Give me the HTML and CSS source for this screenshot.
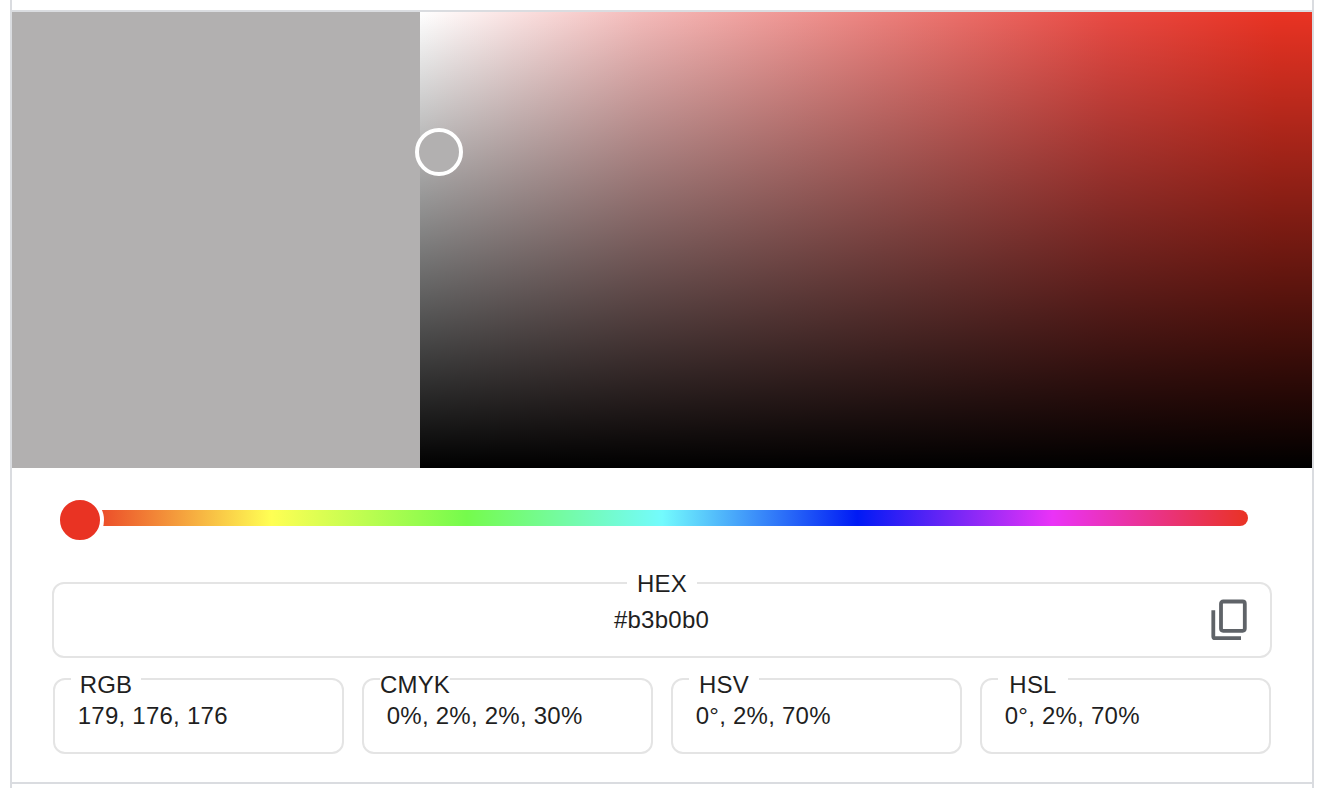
FILE: index.html
```html
<!DOCTYPE html>
<html lang="en">
<head>
<meta charset="utf-8">
<title>Color picker</title>
<link rel="stylesheet" href="styles.css">
</head>
<body>
<main class="frame">
  <section class="picker">
    <div class="canvas">
      <div class="swatch"></div>
      <div class="shades"><span class="cursor"></span></div>
    </div>
    <div class="hue"><div class="track"><span class="thumb"></span></div></div>
    <div class="fields">
      <div class="field hex">
        <span class="label">HEX</span>
        <span class="value">#b3b0b0</span>
        <svg class="copy" width="40" height="44" viewBox="0 0 40 44" fill="none" stroke="#5f6368" stroke-width="3.8">
          <rect x="11" y="3.5" width="23.8" height="29.3" rx="2.2"/>
          <path d="M3.3 12.3V38.4Q3.3 40.2 5.1 40.2H31"/>
        </svg>
      </div>
      <div class="row">
        <div class="field"><span class="label">RGB</span><span class="value">179, 176, 176</span></div>
        <div class="field"><span class="label">CMYK</span><span class="value">0%, 2%, 2%, 30%</span></div>
        <div class="field"><span class="label">HSV</span><span class="value">0°, 2%, 70%</span></div>
        <div class="field"><span class="label">HSL</span><span class="value">0°, 2%, 70%</span></div>
      </div>
    </div>
  </section>
</main>
</body>
</html>
```
FILE: styles.css
```css
* { box-sizing: border-box; }
body {
  margin: 0;
  background: #fff;
  color: #1f1f1f;
  font: 24px/28px "Liberation Sans", Arial, sans-serif;
}
.frame {
  width: 1304px;
  height: 788px;
  margin-left: 10px;
  padding-top: 10px;
  border: solid #dadce0;
  border-width: 0 2px;
  overflow: hidden;
}
.picker {
  height: 774px;
  border: solid #dadce0;
  border-width: 2px 0;
}
.canvas { display: flex; height: 456px; }
.swatch { width: 408px; background: #b2b0b0; }
.shades {
  position: relative;
  flex: 1;
  background: linear-gradient(to top, #000, transparent), linear-gradient(to right, #fff, #f4bab9 25%, #ec7f7b 52%, #e94a43 77%, #e93323 96%);
}
.cursor {
  position: absolute;
  left: -5px;
  top: 116px;
  width: 48px;
  height: 48px;
  border: 4px solid #fff;
  border-radius: 50%;
  background: #b2b0b0;
}
.hue { padding: 42px 64px 0; }
.track {
  position: relative;
  height: 16px;
  border-radius: 8px;
  background: linear-gradient(to right, #e93323, #ffff54 16.66%, #75fb4c 33.33%, #73fbfd 50%, #001af5 66.66%, #ea33f7 83.33%, #e93323);
}
.thumb {
  position: absolute;
  left: -20px;
  top: -14px;
  width: 48px;
  height: 48px;
  border: 4px solid #fff;
  border-radius: 50%;
  background: #e93323;
}
.fields { padding: 56px 40px 0; }
.field {
  position: relative;
  height: 76px;
  border: 2px solid #e4e4e4;
  border-radius: 12px;
}
.label {
  position: absolute;
  left: 16px;
  top: -9px;
  display: flex;
  justify-content: center;
  width: 70px;
  background: #fff;
  letter-spacing: 0.2px;
}
.value { letter-spacing: 0.25px; }
.hex { display: flex; justify-content: center; padding-top: 22px; }
.hex .label { left: 573px; top: -14px; }
.hex .value { margin-right: 1px; }
.copy { position: absolute; left: 1156px; top: 14px; }
.row {
  display: grid;
  grid-template-columns: repeat(4, 291px);
  gap: 18px;
  padding: 20px 1px 0;
}
.row .field { padding: 22px 0 0 22.7px; }
```
